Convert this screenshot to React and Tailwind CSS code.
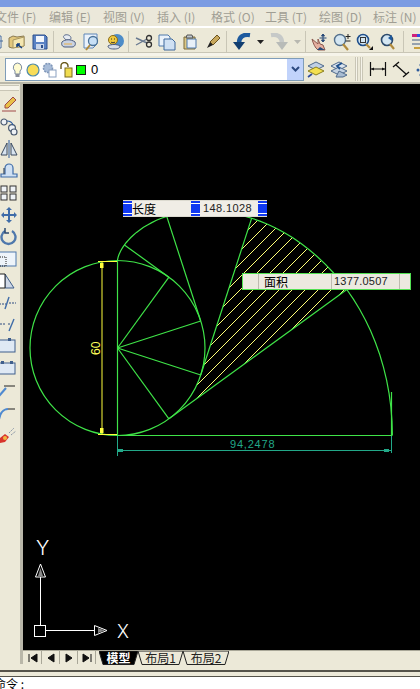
import React from 'react';

const MENUS = ['文件 (F)', '编辑 (E)', '视图 (V)', '插入 (I)', '格式 (O)', '工具 (T)', '绘图 (D)', '标注 (N)'];

const CX = 117.5;
const CY = 348;
const R = 87.5;
const rad = (deg) => (deg * Math.PI) / 180;

// point on the circle, going clockwise from the top
const onCircle = (deg) => [CX + R * Math.sin(rad(deg)), CY - R * Math.cos(rad(deg))];

// the unrolled string: end of the tangent at this angle
const onInvolute = (deg) => {
  const [x, y] = onCircle(deg);
  const len = R * rad(deg);
  return [x - len * Math.cos(rad(deg)), y - len * Math.sin(rad(deg))];
};

const pts = (from, to, fn) => {
  const out = [];
  for (let d = from; d <= to; d += 3) out.push(fn(d).map((n) => n.toFixed(1)).join(','));
  return out;
};

const TANGENTS = [36, 72, 108, 144];
const HATCH = Array.from({ length: 14 }, (_, i) => 465 + i * 13);

const hatchRegion = [...pts(108, 144, onInvolute), ...pts(108, 144, onCircle).reverse()].join(' ');

function Drawing() {
  return (
    <svg className="absolute inset-0" width="397" height="566" viewBox="23 84 397 566">
      <defs>
        <clipPath id="hatch">
          <polygon points={hatchRegion} />
        </clipPath>
      </defs>
      <g clipPath="url(#hatch)" stroke="#ffff78" strokeWidth="1">
        {HATCH.map((c) => (
          <line key={c} x1={c - 460} y1="460" x2={c - 200} y2="200" />
        ))}
      </g>
      <g fill="none" stroke="#3fe448" strokeWidth="1.2">
        <circle cx={CX} cy={CY} r={R} />
        <polyline points={pts(0, 180, onInvolute).join(' ')} />
        {TANGENTS.map((d) => {
          const [x, y] = onCircle(d);
          const [ix, iy] = onInvolute(d);
          return (
            <g key={d}>
              <line x1={CX} y1={CY} x2={x} y2={y} />
              <line x1={x} y1={y} x2={ix} y2={iy} />
            </g>
          );
        })}
        <line x1="117.5" y1="261" x2="117.5" y2="436" />
        <line x1="117" y1="435.5" x2="392" y2="435.5" />
        <line x1="391.5" y1="392" x2="391.5" y2="436" />
      </g>
      {/* dimension 60 */}
      <g stroke="#ffff3c" strokeWidth="1" fill="#ffff3c">
        <line x1="102" y1="261" x2="102" y2="435" />
        <line x1="98" y1="261.5" x2="117" y2="261.5" />
        <line x1="98" y1="434.5" x2="117" y2="434.5" />
        <rect x="100" y="263" width="3.5" height="5" stroke="none" />
        <rect x="100" y="428" width="3.5" height="5" stroke="none" />
      </g>
      <text
        x="0"
        y="0"
        transform="translate(100 355) rotate(-90)"
        fill="#ffff5a"
        fontFamily="Liberation Sans, sans-serif"
        fontSize="12"
      >
        60
      </text>
      {/* dimension 94,2478 */}
      <g stroke="#22a888" strokeWidth="1" fill="#22a888">
        <line x1="117.5" y1="436" x2="117.5" y2="456" />
        <line x1="391.5" y1="436" x2="391.5" y2="453" />
        <line x1="118" y1="450.5" x2="391" y2="450.5" />
        <rect x="118" y="449" width="5" height="3" stroke="none" />
        <rect x="384" y="449" width="5" height="3" stroke="none" />
      </g>
      <text x="230" y="448" fill="#22a888" fontFamily="Liberation Sans, sans-serif" fontSize="11" letterSpacing="0.8">
        94,2478
      </text>
      <Ucs />
    </svg>
  );
}

function Ucs() {
  return (
    <g fill="none" stroke="#fff" strokeWidth="1">
      <rect x="34.5" y="625.5" width="11" height="11" />
      <line x1="40.5" y1="625" x2="40.5" y2="577" />
      <polygon points="35.5,577 45.5,577 40.5,564" />
      <polygon points="40.5,568 43,576 38,576" fill="#888" stroke="none" />
      <line x1="46" y1="630.5" x2="94" y2="630.5" />
      <polygon points="94.5,625.5 94.5,635.5 107,630.5" />
      <polygon points="98,628 98,633 105,630.5" fill="#888" stroke="none" />
      <text x="36" y="555" fill="#fff" stroke="none" fontFamily="Inter, sans-serif" fontSize="20" fontWeight="300">
        Y
      </text>
      <text x="117" y="638" fill="#fff" stroke="none" fontFamily="Inter, sans-serif" fontSize="18" fontWeight="300">
        X
      </text>
    </g>
  );
}

const Icon = ({ children, w = 18, h = 18 }) => (
  <svg width={w} height={h} viewBox={`0 0 ${w} ${h}`} className="shrink-0">
    {children}
  </svg>
);

const Slot = ({ children }) => <div className="w-[23px] flex justify-center items-center shrink-0">{children}</div>;

const Sep = ({ w = 'w-[6px]' }) => (
  <div className={`${w} shrink-0 flex justify-center`}>
    <div className="w-[2px] h-[22px] border-l border-[#c9c6b6] border-r-white" />
  </div>
);

const Caret = ({ color = '#222' }) => (
  <div className="w-[14px] shrink-0 flex justify-center">
    <svg width="7" height="4" viewBox="0 0 7 4">
      <polygon points="0,0 7,0 3.5,4" fill={color} />
    </svg>
  </div>
);

const TOP_ICONS = {
  partial: (
    <Icon>
      <path d="M6 3h10v12H6z" fill="#fff" stroke="#456a9c" />
      <path d="M12 8h6" stroke="#456a9c" />
    </Icon>
  ),
  open: (
    <Icon>
      <path d="M1 5l4-2 4 1 7-1v10l-12 2-3-1z" fill="#e2c77c" stroke="#8a7a52" />
      <path d="M5 7l11-3v9l-11 2z" fill="#f4e6b0" stroke="#a89660" />
      <path d="M9 11l5 4M9 11l3 0M9 11l0 3" stroke="#16407f" strokeWidth="1.6" fill="none" />
    </Icon>
  ),
  save: (
    <Icon>
      <path d="M2 2h12l2 2v12H2z" fill="#5a82c4" stroke="#2c4f8c" />
      <rect x="5" y="3" width="8" height="6" fill="#f2f6fc" />
      <rect x="5" y="11" width="8" height="5" fill="#c9d6ea" />
      <rect x="10" y="12" width="2" height="3" fill="#2c4f8c" />
    </Icon>
  ),
  print: (
    <Icon>
      <path d="M5 2c3-1 6 1 6 3s-4 3-6 1-2-3 0-4z" fill="#e6ebf2" stroke="#5a6b8c" />
      <path d="M2 9c3-3 9-3 13 0 1 2 0 5-3 5H5c-3 0-4-3-3-5z" fill="#c9d2e2" stroke="#4a5a7c" />
      <path d="M4 11h8" stroke="#e8b04a" />
    </Icon>
  ),
  preview: (
    <Icon>
      <path d="M1 1h13v10l-4 4H1z" fill="#eaf2fb" stroke="#5f86b8" />
      <circle cx="10" cy="8" r="4.5" fill="#c8e0f6" stroke="#4a7298" strokeWidth="1.3" />
      <path d="M7 12l-4 5" stroke="#b08a3c" strokeWidth="2" />
    </Icon>
  ),
  publish: (
    <Icon>
      <circle cx="11" cy="8" r="7" fill="#4d8cc8" />
      <circle cx="7" cy="7" r="4.5" fill="#f0c93c" stroke="#8a6c1c" />
      <path d="M5 6h1M8 6h1M5 9c1 1 3 1 4 0" stroke="#333" fill="none" />
      <path d="M2 13c3-2 9-2 12 0 0 2-2 3-6 3s-6-1-6-3z" fill="#d8dee8" stroke="#4a5a7c" />
    </Icon>
  ),
  cut: (
    <Icon>
      <path d="M1 5l11 5M1 12l11-6" stroke="#6a7a90" strokeWidth="1.4" />
      <circle cx="14" cy="5" r="2.5" fill="none" stroke="#333" strokeWidth="1.3" />
      <circle cx="14" cy="11.5" r="2.5" fill="none" stroke="#333" strokeWidth="1.3" />
    </Icon>
  ),
  copy: (
    <Icon>
      <path d="M1 2h9l2 2v9H1z" fill="#eaf2fb" stroke="#4f78ac" />
      <path d="M6 6h8l3 3v8H6z" fill="#cfe0f3" stroke="#3f689c" />
    </Icon>
  ),
  paste: (
    <Icon>
      <path d="M3 4h11v12H3z" fill="#dcc784" stroke="#7a6a3a" />
      <path d="M6 6h9v9H6z" fill="#e8f0f8" stroke="#4f78ac" />
      <path d="M6 2h5l1 3H5z" fill="#bfc6cc" stroke="#555" />
    </Icon>
  ),
  brush: (
    <Icon>
      <path d="M13 2l3 3-7 7-3-3z" fill="#c8a85c" stroke="#6c5420" />
      <path d="M6 9l3 3-6 3z" fill="#222" />
    </Icon>
  ),
  undo: (
    <Icon>
      <path d="M17 2C10 1 6 4 6 10" fill="none" stroke="#1d5a9e" strokeWidth="4.5" />
      <polygon points="0,9 12,9 6,17" fill="#123e70" />
    </Icon>
  ),
  redo: (
    <Icon>
      <path d="M1 2c7-1 11 2 11 8" fill="none" stroke="#c6c9c8" strokeWidth="4.5" />
      <polygon points="18,9 6,9 12,17" fill="#b8bbb8" />
    </Icon>
  ),
  pan: (
    <Icon>
      <path d="M2 6l6 5V6l2 5 3 1 2 5H8C5 15 3 10 2 6z" fill="#e5b0a0" stroke="#8c5a50" />
      <path d="M10 14l5 3H7z" fill="#284a78" />
      <path d="M13 1v8M9.5 5h7M13 1l-1.5 2h3zM13 9l-1.5-2h3z" stroke="#284a78" fill="#284a78" />
    </Icon>
  ),
  zoomRt: (
    <Icon>
      <circle cx="7" cy="7" r="5.5" fill="#d4e6f2" stroke="#54708c" strokeWidth="1.4" />
      <path d="M10 11l5 6" stroke="#b08a3c" strokeWidth="2.2" />
      <path d="M15 1v5M12.5 3.5h5M12.5 8h5" stroke="#222" />
    </Icon>
  ),
  zoomWin: (
    <Icon>
      <circle cx="7" cy="7" r="5.5" fill="#d4e6f2" stroke="#1f4f8c" strokeWidth="1.6" />
      <rect x="4.5" y="4.5" width="5" height="5" fill="none" stroke="#333" />
      <path d="M10 11l4 4" stroke="#b08a3c" strokeWidth="2.2" />
      <polygon points="17,13 17,17 13,17" fill="#111" />
    </Icon>
  ),
  zoomPrev: (
    <Icon>
      <circle cx="8" cy="7" r="5.5" fill="#d4e6f2" stroke="#2c4a6c" strokeWidth="1.6" />
      <path d="M13 2l-4 3 4 3z" fill="#1d5a9e" />
      <path d="M11 11l4 5" stroke="#b08a3c" strokeWidth="2.2" />
    </Icon>
  ),
  props: (
    <Icon>
      <rect x="1" y="1" width="5" height="3" fill="#d0207a" />
      <rect x="6" y="1" width="5" height="3" fill="#3050e0" />
      <rect x="11" y="1" width="5" height="3" fill="#20a050" />
      <path d="M1 7h12M1 11h12" stroke="#7a8aa0" strokeWidth="1.5" />
      <path d="M3 15h10" stroke="#c8a040" strokeWidth="2" />
    </Icon>
  ),
};

function StandardBar() {
  const I = TOP_ICONS;
  return (
    <div className="h-[24px] pt-[3px] flex items-center ml-[-18px] shrink-0">
      <Slot>{I.partial}</Slot>
      <Slot>{I.open}</Slot>
      <Slot>{I.save}</Slot>
      <Sep />
      <Slot>{I.print}</Slot>
      <Slot>{I.preview}</Slot>
      <Slot>{I.publish}</Slot>
      <Sep />
      <Slot>{I.cut}</Slot>
      <Slot>{I.copy}</Slot>
      <Slot>{I.paste}</Slot>
      <Slot>{I.brush}</Slot>
      <Sep />
      <Slot>{I.undo}</Slot>
      <Caret />
      <Slot>{I.redo}</Slot>
      <Caret color="#b8b8b0" />
      <Sep w="w-[3px]" />
      <Slot>{I.pan}</Slot>
      <Slot>{I.zoomRt}</Slot>
      <Slot>{I.zoomWin}</Slot>
      <Slot>{I.zoomPrev}</Slot>
      <Sep w="w-[9px]" />
      <Slot>{I.props}</Slot>
    </div>
  );
}

function LayerBar() {
  return (
    <div className="h-[26px] flex items-center shrink-0">
      <div className="ml-[5px] mt-[1px] w-[299px] h-[23px] bg-white border border-[#7f9db9] flex items-center shrink-0">
        <div className="ml-[5px] flex items-center gap-[2px]">
          <Icon w={13} h={16}>
            <path d="M6.5 1a4.5 4.5 0 0 1 2.5 8v3H4V9a4.5 4.5 0 0 1 2.5-8z" fill="#fffbd0" stroke="#7a8aa0" />
            <rect x="4.5" y="12" width="4" height="3" fill="#8a8f9c" />
          </Icon>
          <Icon w={14} h={16}>
            <circle cx="7" cy="8" r="6" fill="#f8dc58" stroke="#4f8aa8" strokeWidth="1.2" />
          </Icon>
          <Icon w={15} h={16}>
            <circle cx="6" cy="6" r="4.5" fill="#a8bcd8" stroke="#7f96b8" strokeWidth="1.6" strokeDasharray="2 1" />
            <rect x="7" y="8" width="7" height="7" fill="#fff" stroke="#8aa0c0" />
          </Icon>
          <Icon w={14} h={16}>
            <path d="M2 7V4a3.5 3.5 0 0 1 7 0v1" fill="none" stroke="#6a5a1c" strokeWidth="1.4" />
            <rect x="6" y="6" width="7" height="9" fill="#f0dc50" stroke="#7a6a1c" />
          </Icon>
          <div className="w-[10px] h-[10px] bg-[#00ff00] border border-[#1a1a1a] ml-[1px] shrink-0" />
          <span className="ml-[3px] text-[13px] leading-none text-black [font-family:'Liberation_Sans',sans-serif]">0</span>
        </div>
        <div className="ml-auto w-[16px] h-[21px] bg-[#c1d3fb] flex items-center justify-center shrink-0">
          <svg width="9" height="7" viewBox="0 0 9 7">
            <path d="M1 1l3.5 3.5L8 1" fill="none" stroke="#2c4a80" strokeWidth="2" />
          </svg>
        </div>
      </div>
      <div className="ml-[3px] flex items-center gap-[5px]">
        <Icon>
          <path d="M9 2l8 4-8 4-8-4z" fill="#c0d0e4" stroke="#4f6a8c" />
          <path d="M9 7l8 4-8 4-8-4z" fill="#f4e050" stroke="#8a8020" />
          <path d="M1 17l4-3" stroke="#2c4a9c" strokeWidth="1.6" />
        </Icon>
        <Icon>
          <path d="M9 2l8 4-8 4-8-4z" fill="#dbe4ee" stroke="#4f6a8c" />
          <path d="M9 7l8 4-8 4-8-4z" fill="#c4d2e2" stroke="#4f6a8c" />
          <path d="M9 11l8 4-4 2H6z" fill="#a8bcd2" stroke="#4f6a8c" />
          <path d="M12 3L7 6l3 3" fill="none" stroke="#1d4f8c" strokeWidth="1.8" />
        </Icon>
      </div>
      <div className="ml-[7px] w-[8px] h-[24px] flex justify-between shrink-0">
        <div className="w-[3px] border-x border-[#c9c6b6] bg-[#f6f4ea]" />
        <div className="w-[3px] border-x border-[#c9c6b6] bg-[#f6f4ea]" />
      </div>
      <div className="ml-[6px] flex items-center gap-[5px]">
        <Icon>
          <path d="M1.5 2v14M16.5 2v14M2 9h14" stroke="#111" fill="none" strokeWidth="1.2" />
          <path d="M2 9l3-1.5v3zM16 9l-3-1.5v3z" fill="#111" />
        </Icon>
        <Icon>
          <path d="M1 7l6-5M11 17l6-5M4 5l10 9" stroke="#111" fill="none" strokeWidth="1.3" />
        </Icon>
        <Icon w={8}>
          <circle cx="6" cy="5" r="1.5" fill="#2c5a9c" />
          <circle cx="3" cy="10" r="1.5" fill="#2c5a9c" />
          <circle cx="6" cy="15" r="1.5" fill="#2c5a9c" />
        </Icon>
      </div>
    </div>
  );
}

const SIDE_ICONS = [
  <path key="a" d="M13 1l3 3-8 8H5V9zM2 15h14" fill="#e8c048" stroke="#a04848" />,
  <g key="b" fill="#eef2f6" stroke="#4a5a70" strokeWidth="1.2">
    <circle cx="4" cy="4" r="3" />
    <circle cx="12" cy="10" r="3.4" />
    <circle cx="14" cy="14" r="3" />
    <path d="M7 3c3 0 5 1 6 4" fill="none" stroke="#2c5a9c" />
  </g>,
  <g key="c" stroke="#3a4a60" fill="#d8e4f0">
    <path d="M7 3v12H1zM11 3v12h6z" />
    <path d="M9 0v18" stroke="#2c5a9c" />
  </g>,
  <g key="d" stroke="#3f6ca8" fill="#cfe0f3" strokeWidth="1.2">
    <path d="M1 15v-3h4V6a4 4 0 0 1 8 0v6h4v3z" />
    <path d="M4 12V6" stroke="#3a4a60" fill="none" />
  </g>,
  <g key="e" fill="#eef2f6" stroke="#333">
    <rect x="1" y="2" width="6" height="6" />
    <rect x="10" y="2" width="6" height="6" />
    <rect x="1" y="10" width="6" height="6" />
    <rect x="10" y="10" width="6" height="6" />
  </g>,
  <path key="f" d="M9 1l3 3h-2v4h4V6l3 3-3 3v-2h-4v4h2l-3 3-3-3h2v-4H4v2L1 9l3-3v2h4V4H6z" fill="#3f6ca8" />,
  <g key="g" fill="none" stroke="#4f78ac" strokeWidth="2.4">
    <path d="M5 3a7 7 0 1 0 7 0" />
    <path d="M5 0v5h4" strokeWidth="1.5" stroke="#2c4a70" />
  </g>,
  <g key="h" fill="#eef4fa" stroke="#4f78ac">
    <rect x="-2" y="2" width="18" height="14" />
    <rect x="-2" y="7" width="8" height="9" fill="none" stroke="#222" strokeDasharray="1 1" />
  </g>,
  <g key="i" fill="#cfd8e6" stroke="#3f5f8c">
    <path d="M5 2l9 14H5z" />
    <path d="M-2 2h7v14h-7" fill="#fff" stroke="#222" />
  </g>,
  <g key="j" fill="none">
    <path d="M-1 10h7M9 9h7" stroke="#2c4a80" strokeDasharray="2 1" />
    <path d="M9 3L5 15" stroke="#3f6ca8" strokeWidth="1.4" />
  </g>,
  <g key="k" fill="none">
    <path d="M0 8h6" stroke="#2c4a80" strokeDasharray="2 1" />
    <path d="M14 3L9 15" stroke="#3f6ca8" strokeWidth="1.4" />
    <path d="M8 8h2" stroke="#2c4a80" />
  </g>,
  <g key="l">
    <rect x="-2" y="2" width="17" height="12" fill="#dfe9f4" stroke="#3f5f8c" />
    <rect x="8" y="0" width="3" height="3" fill="#3f5f8c" />
  </g>,
  <g key="m">
    <rect x="-2" y="3" width="17" height="11" fill="#dfe9f4" stroke="#3f5f8c" />
    <rect x="1" y="1" width="3" height="3" fill="#3f5f8c" />
    <rect x="10" y="1" width="3" height="3" fill="#3f5f8c" />
  </g>,
  <g key="n" fill="none">
    <path d="M4 4h11" stroke="#222" />
    <path d="M-1 14L6 6" stroke="#4f8ad0" strokeWidth="2" />
  </g>,
  <g key="o" fill="none">
    <path d="M8 5h7" stroke="#222" />
    <path d="M-1 15c1-5 4-10 9-10" stroke="#4f8ad0" strokeWidth="2.2" />
  </g>,
  <g key="p">
    <path d="M0 12l5-4 4 3-4 5-5 1z" fill="#d8342c" />
    <circle cx="5" cy="12" r="2" fill="#f0b840" />
    <path d="M9 7l5-5M11 9l5-4" stroke="#8a96a6" strokeDasharray="2 1" />
  </g>,
];

function ModifyBar() {
  return (
    <div className="w-[23px] shrink-0 h-[582px] border-r-[3px] border-r-[#b9b7a9] flex flex-col pt-[1px]">
      <div className="h-[6px] w-[19px] border-y border-[#c9c6b6] bg-[#f6f4ea] shrink-0" />
      <div className="flex flex-col gap-[4px] mt-[5px]">
        {SIDE_ICONS.map((icon, i) => (
          <svg key={i} width="18" height="18" viewBox="0 0 18 18" className="overflow-hidden shrink-0">
            {icon}
          </svg>
        ))}
      </div>
    </div>
  );
}

const LabelCell = ({ className = '', children }) => (
  <div className={`h-full flex items-center shrink-0 ${className}`}>{children}</div>
);

const Grip = () => (
  <div className="w-[9px] h-full shrink-0 bg-[#1038f0] flex flex-col justify-between py-[2px]">
    <div className="h-px bg-white" />
    <div className="h-px bg-white" />
  </div>
);

function LengthLabel() {
  return (
    <div className="absolute left-[100px] top-[116px] w-[144px] h-[17px] bg-[#f0ede6] flex text-[12px] leading-none text-black border-y border-[#dcdad0]">
      <Grip />
      <LabelCell className="w-[59px] [font-family:'Noto_Sans_CJK_SC',sans-serif]">长度</LabelCell>
      <Grip />
      <LabelCell className="w-[58px] pl-[3px] text-[11px] text-[#222] [font-family:'Liberation_Sans',sans-serif] tracking-[0.4px]">148.1028</LabelCell>
      <Grip />
    </div>
  );
}

function AreaLabel() {
  return (
    <div className="absolute left-[219px] top-[189px] w-[169px] h-[17px] bg-[#ece9e0] border border-[#52e052] flex text-black">
      <LabelCell className="w-[16px] border-r border-[#bdbbb0]" />
      <LabelCell className="w-[73px] pl-[5px] border-r border-[#bdbbb0] text-[12px] [font-family:'Noto_Sans_CJK_SC',sans-serif]">面积</LabelCell>
      <LabelCell className="w-[68px] pl-[2px] border-r border-[#bdbbb0] text-[11px] text-[#222] [font-family:'Liberation_Sans',sans-serif] tracking-[0.2px]">1377.0507</LabelCell>
    </div>
  );
}

const NavButton = ({ d }) => (
  <div className="w-[18px] h-full border-r border-[#a9a798] flex items-center justify-center shrink-0">
    <svg width="10" height="10" viewBox="0 0 10 10">
      <path d={d} fill="#111" stroke="#111" />
    </svg>
  </div>
);

const Tab = ({ label, width, active }) => (
  <div
    className={`relative h-full flex items-center justify-center text-[12px] leading-none shrink-0 [font-family:'Noto_Sans_CJK_SC',sans-serif] ${
      active ? 'font-bold text-white' : 'text-[#222]'
    }`}
    style={{ width }}
  >
    <svg className="absolute inset-0" width={width} height="14" viewBox={`0 0 ${width} 14`}>
      <polygon
        points={`0,0 ${width},0 ${width - 4},13.5 4,13.5`}
        fill={active ? '#000' : '#ece9d8'}
        stroke="#222"
      />
    </svg>
    <span className="relative">{label}</span>
  </div>
);

function TabBar() {
  return (
    <div className="h-[14px] flex items-center shrink-0 bg-[#ece9d8] border-t border-[#a9a798]">
      <div className="flex h-full ml-px">
        <NavButton d="M1 1v8M9 1L3 5l6 4z" />
        <NavButton d="M8 1L2 5l6 4z" />
        <NavButton d="M2 1l6 4-6 4z" />
        <NavButton d="M1 1l6 4-6 4zM9 1v8" />
      </div>
      <div className="flex h-full ml-[3px]">
        <Tab label="模型" width={39} active />
        <Tab label="布局1" width={45} />
        <Tab label="布局2" width={46} />
      </div>
    </div>
  );
}

export default function App() {
  return (
    <div className="w-[420px] h-[689px] overflow-hidden bg-[#ece9d8] flex flex-col">
      <div className="h-[7px] bg-[#7b9be2] shrink-0" />
      <div className="h-[19px] flex items-center ml-[-5px] shrink-0 bg-[#ebe8da] text-[12px] leading-none text-[#a09e94] [font-family:'Noto_Sans_CJK_SC',sans-serif]">
        {MENUS.map((m) => (
          <div key={m} className="w-[54px] shrink-0 whitespace-nowrap">
            {m}
          </div>
        ))}
      </div>
      <div className="h-[2px] bg-white shrink-0" />
      <StandardBar />
      <div className="h-[4px] border-t border-[#c9c6b6] bg-[#f6f4ea] shrink-0" />
      <LayerBar />
      <div className="h-[2px] bg-[#b9b7a9] shrink-0" />
      <div className="flex h-[580px] shrink-0">
        <ModifyBar />
        <div className="flex-1 flex flex-col">
          <div className="relative h-[566px] bg-black shrink-0 overflow-hidden">
            <Drawing />
            <LengthLabel />
            <AreaLabel />
          </div>
          <TabBar />
        </div>
      </div>
      <div className="h-[8px] bg-[#ece9d8] border-b-2 border-[#55534a] shrink-0" />
      <div className="h-[5px] bg-[#ece9d8] border-b border-[#55534a] shrink-0" />
      <div className="flex-1 bg-white text-[12px] leading-none text-black overflow-hidden [font-family:'Noto_Sans_CJK_SC',sans-serif]">
        <div className="ml-[-6px] mt-[1px] whitespace-nowrap">命令 :</div>
      </div>
    </div>
  );
}
